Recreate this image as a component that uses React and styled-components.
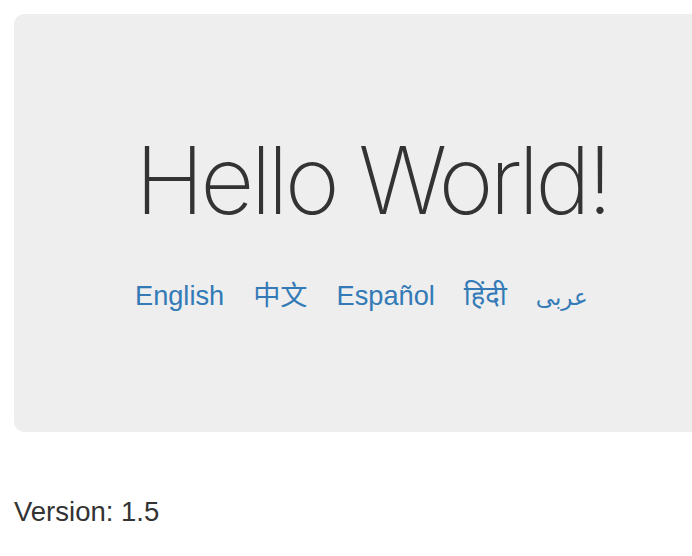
import styled, { createGlobalStyle } from "styled-components";

const Global = createGlobalStyle`
  html, body {
    margin: 0;
    padding: 0;
    background: #fff;
  }
  body {
    font-family: "Liberation Sans", Arial, sans-serif;
    color: #333;
    overflow: hidden;
  }
`;

const Page = styled.div`
  padding: 14px;
  width: 720px;
`;

const Jumbotron = styled.div`
  background: #eee;
  border-radius: 10px;
  height: 418px;
  padding: 0 0 0 121px;
  box-sizing: border-box;
  display: flex;
  flex-direction: column;
`;

const Title = styled.h1`
  margin: 111px 0 0 0;
  font-family: Inter, "Liberation Sans", sans-serif;
  font-weight: 200;
  font-size: 94px;
  line-height: 110px;
  letter-spacing: -4px;
  color: #333;
`;

const Langs = styled.div`
  display: flex;
  align-items: baseline;
  gap: 29px;
  margin-top: 43px;
  font-size: 27.2px;
  line-height: 30px;
`;

const Lang = styled.a`
  color: #337ab7;
  text-decoration: none;
  font-family: ${(p) => p.$font || `"Liberation Sans", Arial, sans-serif`};
  font-size: ${(p) => p.$size || "inherit"};
`;

const Version = styled.p`
  margin: 65px 0 0 0;
  font-size: 27.5px;
  line-height: 30px;
`;

export default function App() {
  return (
    <>
      <Global />
      <Page>
        <Jumbotron>
          <Title>Hello World!</Title>
          <Langs>
            <Lang href="#">English</Lang>
            <Lang href="#" $font={`"Noto Sans CJK SC", sans-serif`}>中文</Lang>
            <Lang href="#">Español</Lang>
            <Lang href="#" $font={`"Noto Sans", "DejaVu Sans", sans-serif`}>हिंदी</Lang>
            <Lang href="#" $font={`"DejaVu Sans", sans-serif`} $size="23px">عربى</Lang>
          </Langs>
        </Jumbotron>
        <Version>Version: 1.5</Version>
      </Page>
    </>
  );
}
